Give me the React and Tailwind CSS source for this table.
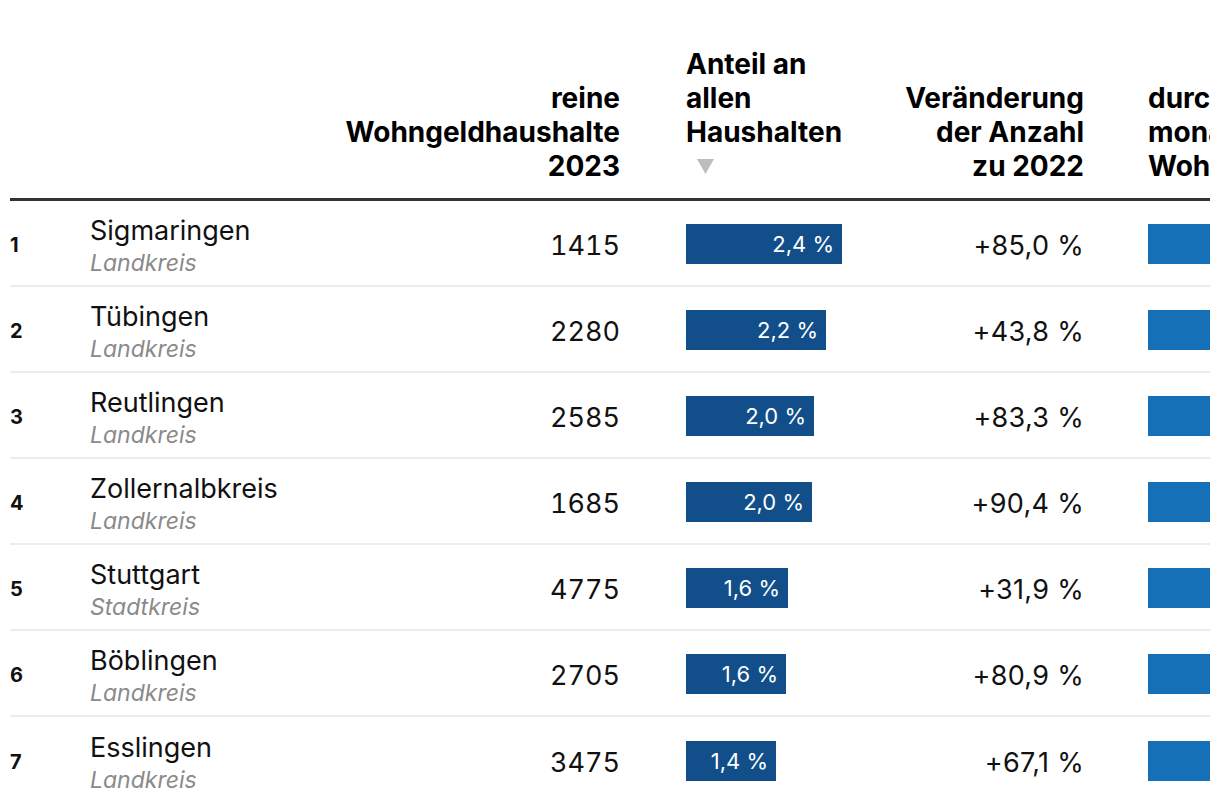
// App.jsx - Wohngeld ranking table (Baden-Württemberg Kreise)
import React from "react";

const ROWS = [
  { rank: 1, name: "Sigmaringen", type: "Landkreis", count: 1415, share: 2.4, change: "+85,0 %" },
  { rank: 2, name: "Tübingen", type: "Landkreis", count: 2280, share: 2.2, change: "+43,8 %", w: 140 },
  { rank: 3, name: "Reutlingen", type: "Landkreis", count: 2585, share: 2.0, change: "+83,3 %", w: 128 },
  { rank: 4, name: "Zollernalbkreis", type: "Landkreis", count: 1685, share: 2.0, change: "+90,4 %", w: 126 },
  { rank: 5, name: "Stuttgart", type: "Stadtkreis", count: 4775, share: 1.6, change: "+31,9 %", w: 102 },
  { rank: 6, name: "Böblingen", type: "Landkreis", count: 2705, share: 1.6, change: "+80,9 %", w: 100 },
  { rank: 7, name: "Esslingen", type: "Landkreis", count: 3475, share: 1.4, change: "+67,1 %", w: 90 },
];

const fmt = (n) => n.toFixed(1).replace(".", ",") + " %";

// grid columns: rank | name | count | share bar | change | avg claim (clipped)
const COLS = "grid grid-cols-[80px_240px_290px_270px_194px_200px]";

export default function App() {
  return (
    <div className="bg-white min-h-[812px] px-[10px] pt-[47px] font-['Inter',sans-serif] text-[#111]">
      <div className="w-[1200px] overflow-hidden">
        <div className="w-[1300px]">
          {/* Header */}
          <div className={`${COLS} items-end border-b-[3px] border-[#333] pb-[15px] text-[28px] font-bold leading-[34px] text-black`}>
            <div />
            <div />
            <div className="text-right">
              reine
              <br />
              Wohngeldhaushalte
              <br />
              2023
            </div>
            <div className="pl-[66px]">
              Anteil an
              <br />
              allen
              <br />
              Haushalten
              <div className="flex h-[34px] items-center pl-[11px]">
                <svg width="17" height="15" viewBox="0 0 17 15">
                  <path d="M0 0 H17 L8.5 15 Z" fill="#bdbdbd" />
                </svg>
              </div>
            </div>
            <div className="text-right">
              Veränderung
              <br />
              der Anzahl
              <br />
              zu 2022
            </div>
            <div className="whitespace-nowrap pl-[64px]">
              durchschnittl.
              <br />
              monatlicher
              <br />
              Wohngeld
            </div>
          </div>

          {/* Rows */}
          {ROWS.map((r) => (
            <div key={r.rank} className={`${COLS} h-[86px] items-center border-b-2 border-[#ececec] last:border-b-0`}>
              <div className="pt-[3px] text-[20px] font-bold">{r.rank}</div>
              <div className="flex flex-col pt-[7px]">
                <span className="text-[27px] leading-[32px]">{r.name}</span>
                <span className="text-[23px] italic leading-[32px] text-[#8a8a8a]">{r.type}</span>
              </div>
              <div className="pt-[6px] text-right text-[27px] tabular-nums">{r.count}</div>
              <div className="pl-[66px] pt-[2px]">
                <div
                  className="flex h-[40px] items-center justify-end bg-[#114e8a] pr-[8px] text-[22px] text-white"
                  style={{ width: r.w ?? Math.round(r.share * 65) }}
                >
                  {fmt(r.share)}
                </div>
              </div>
              <div className="pt-[6px] text-right text-[27px] tracking-[0.3px]">{r.change}</div>
              <div className="pl-[64px] pt-[2px]">
                <div className="h-[40px] w-[160px] bg-[#1570b7]" />
              </div>
            </div>
          ))}
        </div>
      </div>
    </div>
  );
}
